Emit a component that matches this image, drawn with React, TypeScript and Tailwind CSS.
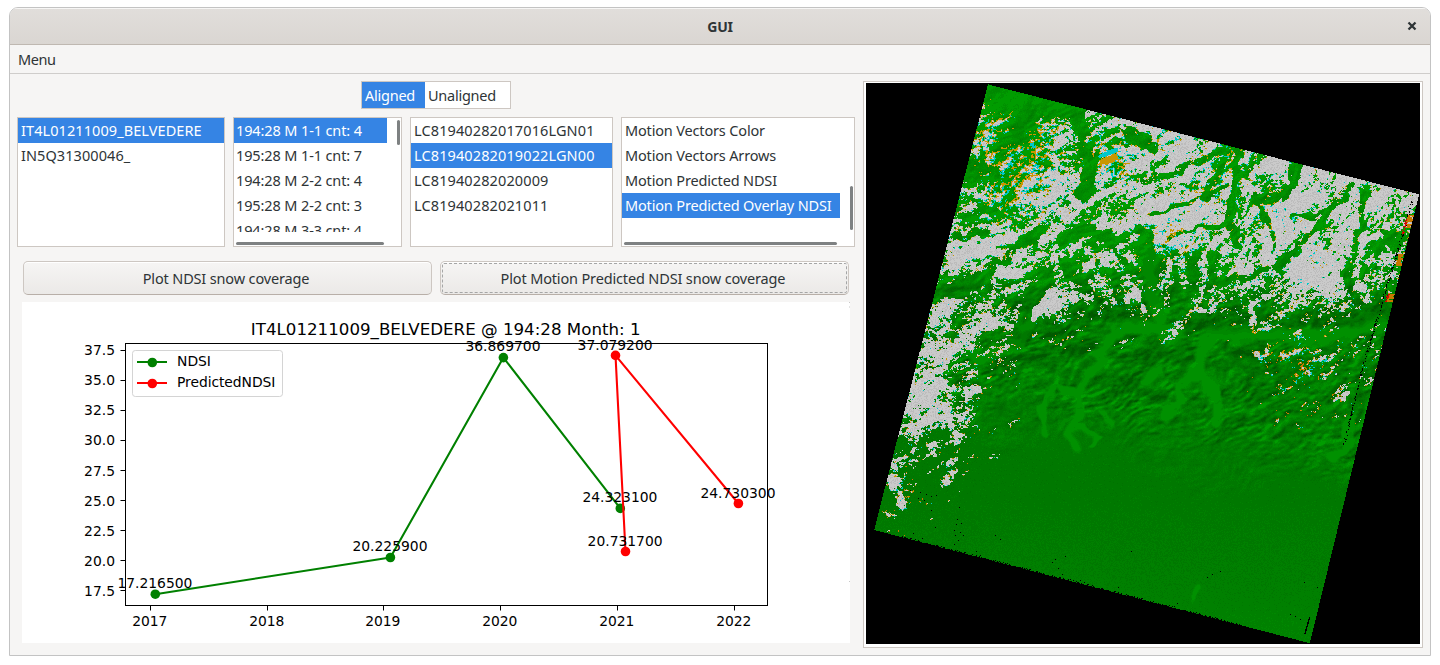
import { useMemo, type ReactNode } from "react";

/* ---------- terrain raster ---------- */

type Pt = [number, number];

const X0 = 866;
const Y0 = 83;
const W = 554;
const H = 561;

// Snow cover in percent, sampled every 40px from (860, 80).
const SNOW: number[][] = [
  [0, 0, 0, 0, 0, 10, 60, 60, 70, 60, 40, 60, 60, 60, 60],
  [0, 30, 36, 40, 16, 42, 60, 72, 85, 48, 50, 68, 84, 84, 74],
  [0, 30, 50, 55, 42, 55, 56, 70, 78, 52, 62, 70, 92, 86, 78],
  [0, 30, 30, 44, 54, 72, 82, 80, 70, 72, 48, 84, 88, 78, 68],
  [0, 50, 82, 86, 82, 68, 44, 58, 82, 86, 88, 84, 86, 60, 34],
  [0, 30, 50, 52, 66, 60, 42, 30, 20, 44, 48, 84, 68, 44, 0],
  [30, 46, 58, 52, 10, 26, 8, 8, 3, 3, 22, 20, 16, 8, 0],
  [60, 74, 70, 36, 0, 2, 0, 0, 0, 2, 10, 30, 42, 26, 0],
  [60, 82, 66, 10, 4, 0, 0, 0, 0, 0, 4, 12, 12, 2, 0],
  [10, 18, 38, 12, 0, 0, 0, 0, 0, 0, 0, 0, 0, 0, 0],
  [20, 30, 6, 0, 0, 0, 0, 0, 0, 0, 0, 0, 0, 0, 0],
  [4, 10, 0, 0, 0, 0, 0, 0, 0, 0, 0, 0, 0, 0, 0],
  [0, 0, 0, 0, 0, 0, 0, 0, 0, 0, 0, 0, 0, 0, 0],
];

const TINT: [number, number, number, number][] = [
  [1000, 140, 40, 0.9],
  [1025, 175, 38, 1],
  [1035, 130, 22, 0.7],
  [1112, 158, 26, 1],
  [1160, 130, 25, 0.6],
  [1170, 234, 30, 0.8],
  [1230, 160, 26, 0.6],
  [1272, 212, 20, 0.9],
  [1315, 260, 16, 0.6],
  [1290, 365, 45, 0.8],
  [1000, 205, 26, 0.5],
  [905, 495, 20, 0.4],
  [1205, 190, 25, 0.5],
];

const VALLEYS: { w: number; p: Pt[] }[] = [
  { w: 4, p: [[1079, 112], [1084, 140], [1092, 162], [1082, 195]] },
  { w: 5, p: [[1040, 108], [1022, 118], [1015, 138], [1000, 150]] },
  { w: 7, p: [[962, 178], [975, 172], [990, 172]] },
  { w: 3, p: [[940, 290], [970, 282], [1000, 262], [1042, 228]] },
  { w: 4, p: [[930, 292], [950, 290], [975, 286]] },
  { w: 3, p: [[958, 236], [985, 232]] },
  { w: 3, p: [[950, 208], [975, 214], [995, 208]] },
  { w: 4, p: [[1062, 240], [1085, 230], [1105, 236], [1125, 252], [1145, 276]] },
  { w: 5, p: [[1143, 234], [1147, 270], [1150, 300]] },
  { w: 2, p: [[1142, 180], [1170, 172], [1200, 160], [1225, 150]] },
  { w: 2.4, p: [[1236, 150], [1232, 190], [1229, 222], [1240, 245]] },
  { w: 2.6, p: [[1256, 200], [1285, 196], [1298, 165]] },
  { w: 2, p: [[1256, 198], [1265, 222], [1274, 246]] },
  { w: 2.2, p: [[1352, 182], [1335, 206], [1312, 232], [1295, 255], [1270, 270], [1215, 282]] },
  { w: 2, p: [[1365, 195], [1362, 222], [1352, 246]] },
  { w: 1.6, p: [[1290, 215], [1315, 218], [1335, 208]] },
  { w: 2, p: [[1380, 230], [1405, 240]] },
  { w: 3, p: [[1365, 250], [1390, 240], [1400, 260]] },
  { w: 3, p: [[1345, 270], [1350, 290], [1365, 305]] },
  { w: 6, p: [[1026, 330], [1028, 305], [1046, 275]] },
  { w: 3, p: [[1062, 258], [1072, 275], [1082, 283]] },
  { w: 2, p: [[1100, 260], [1085, 278], [1080, 292], [1100, 302]] },
  { w: 3, p: [[1115, 270], [1110, 290], [1120, 305]] },
  { w: 3, p: [[1175, 255], [1176, 292]] },
  { w: 3, p: [[1194, 255], [1190, 290]] },
  { w: 3, p: [[1213, 255], [1215, 280]] },
  { w: 2, p: [[1205, 200], [1212, 180], [1220, 165]] },
  { w: 1.6, p: [[1150, 215], [1190, 205], [1225, 185]] },
  { w: 1.6, p: [[1160, 242], [1190, 230], [1228, 222]] },
  { w: 4, p: [[1130, 132], [1150, 145]] },
];

const RIDGES: Pt[][] = [
  [[955, 348], [962, 335], [985, 325], [1010, 325]],
  [[1062, 298], [1040, 310], [1035, 316]],
  [[1171, 250], [1167, 280], [1163, 298]],
  [[1207, 260], [1203, 285], [1193, 305], [1180, 325], [1165, 340]],
  [[1195, 310], [1215, 308]],
  [[1252, 322], [1252, 305], [1262, 295], [1290, 285]],
  [[1180, 258], [1183, 280]],
  [[1120, 245], [1130, 255], [1138, 264]],
  [[1115, 262], [1130, 285], [1142, 308]],
  [[1050, 300], [1062, 285], [1072, 282]],
  [[1050, 310], [1075, 302], [1088, 298]],
  [[1090, 260], [1095, 275], [1108, 290]],
  [[930, 350], [915, 375], [905, 420]],
  [[945, 400], [948, 425], [958, 440], [952, 465], [945, 485]],
  [[930, 395], [932, 430]],
  [[965, 394], [980, 388]],
  [[892, 470], [896, 490], [902, 505]],
  [[930, 442], [932, 455]],
  [[1360, 282], [1367, 298]],
  [[1330, 290], [1325, 310]],
  [[1300, 275], [1290, 300]],
];

const LAKES: { w: number; p: Pt[] }[] = [
  { w: 5, p: [[1108, 340], [1102, 354]] },
  { w: 3, p: [[1100, 358], [1080, 386], [1078, 415], [1068, 430], [1076, 447]] },
  { w: 3, p: [[1060, 388], [1076, 396]] },
  { w: 2, p: [[1052, 388], [1042, 410], [1046, 432]] },
  { w: 2, p: [[1090, 445], [1096, 435], [1076, 426]] },
  { w: 3, p: [[1102, 416], [1110, 425]] },
  { w: 3.5, p: [[1202, 350], [1200, 372], [1217, 400], [1216, 422]] },
  { w: 3, p: [[1196, 372], [1176, 388], [1178, 404], [1165, 416]] },
  { w: 3, p: [[1160, 370], [1145, 380]] },
  { w: 5, p: [[1204, 350], [1212, 334], [1260, 332], [1330, 336], [1384, 322]] },
  { w: 5, p: [[1115, 330], [1150, 328], [1175, 334]] },
  { w: 3, p: [[1350, 420], [1346, 450], [1330, 456]] },
  { w: 2, p: [[1197, 590], [1192, 600]] },
  { w: 4, p: [[1035, 316], [1020, 340], [975, 360]] },
  { w: 4, p: [[1150, 255], [1150, 290], [1160, 320]] },
  { w: 4, p: [[1215, 295], [1225, 285], [1270, 272]] },
];

const DARKS: { w: number; p: Pt[] }[] = [
  { w: 6, p: [[1190, 320], [1230, 323], [1290, 318], [1385, 312]] },
  { w: 4, p: [[1000, 344], [1040, 332], [1085, 318], [1140, 312]] },
  { w: 4, p: [[1000, 362], [1050, 352], [1090, 345]] },
  { w: 4, p: [[1060, 290], [1090, 298], [1110, 306], [1150, 316]] },
  { w: 4, p: [[1218, 300], [1232, 312]] },
  { w: 3, p: [[1160, 262], [1160, 285], [1176, 312]] },
  { w: 4, p: [[1115, 352], [1130, 362], [1160, 352], [1190, 356]] },
  { w: 4, p: [[1095, 400], [1125, 385], [1155, 392]] },
  { w: 4, p: [[1230, 350], [1260, 362], [1290, 385]] },
];

// Pixels with no data, scattered near the southern border.
const GAPS: Pt[] = [
  [910, 490], [920, 492], [926, 494], [931, 496], [924, 500], [936, 495], [918, 498], [931, 510], [959, 507],
  [957, 519], [956, 524], [961, 523], [954, 530], [960, 532], [955, 535], [958, 540], [954, 544], [963, 535],
  [935, 527], [913, 533], [922, 538], [936, 545], [976, 551], [980, 555], [995, 535], [1000, 539], [1131, 551],
  [1055, 559], [1052, 562], [1065, 556], [1058, 568], [1062, 574], [1070, 579], [1080, 580], [1084, 582],
  [1118, 587], [1207, 577], [1212, 574], [1220, 571], [1304, 582], [1317, 587], [1290, 614], [1295, 616],
  [1300, 619], [1177, 603], [1174, 606], [1227, 621], [1239, 624],
];

function hash(x: number, y: number, s: number): number {
  let h = Math.imul(x, 374761393) + Math.imul(y, 668265263) + Math.imul(s, 1442695041);
  h = Math.imul(h ^ (h >>> 13), 1274126177);
  h = Math.imul(h ^ (h >>> 15), 2246822519);
  return ((h ^ (h >>> 16)) >>> 0) / 4294967296;
}

function noise(x: number, y: number, s: number): number {
  const xi = Math.floor(x);
  const yi = Math.floor(y);
  const fx = x - xi;
  const fy = y - yi;
  const u = fx * fx * (3 - 2 * fx);
  const v = fy * fy * (3 - 2 * fy);
  const a = hash(xi, yi, s);
  const b = hash(xi + 1, yi, s);
  const c = hash(xi, yi + 1, s);
  const d = hash(xi + 1, yi + 1, s);
  return a + (b - a) * u + (c - a) * v + (a - b - c + d) * u * v;
}

function folds(x: number, y: number, t: number): number {
  const u = x * Math.cos(t) - y * Math.sin(t);
  const v = x * Math.sin(t) + y * Math.cos(t);
  return 0.55 * noise(u / 17, v / 7, 1) + 0.45 * noise(u / 7, v / 3.2, 2);
}

// Ridges run up to the right in the west and steepen towards the east.
function relief(x: number, y: number): number {
  const wx = x + 14 * (noise(x / 30, y / 30, 9) - 0.5);
  const wy = y + 14 * (noise(x / 30, y / 30, 10) - 0.5);
  const k = y > 320 ? 0 : Math.max(0, Math.min(1, (x - 1150) / 80)) * Math.min(1, (320 - y) / 50);
  if (k === 0) return folds(wx, wy, 0.45);
  if (k === 1) return folds(wx, wy, 0.9);
  return folds(wx, wy, 0.45) * (1 - k) + folds(wx, wy, 0.9) * k;
}

function segDist(x: number, y: number, a: Pt, b: Pt): number {
  const dx = b[0] - a[0];
  const dy = b[1] - a[1];
  const t = Math.max(0, Math.min(1, ((x - a[0]) * dx + (y - a[1]) * dy) / (dx * dx + dy * dy)));
  return Math.hypot(x - a[0] - t * dx, y - a[1] - t * dy);
}

function field(lines: { w: number; p: Pt[] }[]): Float32Array {
  const out = new Float32Array(W * H);
  for (const { w, p } of lines) {
    for (let i = 0; i + 1 < p.length; i++) {
      const r = w * 2;
      const pad = r + 5;
      const xa = Math.max(0, Math.floor(Math.min(p[i][0], p[i + 1][0]) - pad - X0));
      const xb = Math.min(W - 1, Math.ceil(Math.max(p[i][0], p[i + 1][0]) + pad - X0));
      const ya = Math.max(0, Math.floor(Math.min(p[i][1], p[i + 1][1]) - pad - Y0));
      const yb = Math.min(H - 1, Math.ceil(Math.max(p[i][1], p[i + 1][1]) + pad - Y0));
      for (let y = ya; y <= yb; y++) {
        for (let x = xa; x <= xb; x++) {
          const jx = 8 * (noise(x / 9, y / 9, 21) - 0.5);
          const jy = 8 * (noise(x / 9, y / 9, 22) - 0.5);
          const d = segDist(x + X0 + jx, y + Y0 + jy, p[i], p[i + 1]);
          const k = Math.max(0, Math.min(1, (r - d) / w));
          if (k > out[y * W + x]) out[y * W + x] = k;
        }
      }
    }
  }
  return out;
}

function snowAt(x: number, y: number): number {
  const gx = (x - 860) / 40;
  const gy = Math.min(11.99, Math.max(0, (y - 80) / 40));
  const xi = Math.min(13, Math.floor(gx));
  const yi = Math.floor(gy);
  const fx = gx - xi;
  const fy = gy - yi;
  const r0 = SNOW[yi];
  const r1 = SNOW[yi + 1];
  return ((r0[xi] * (1 - fx) + r0[xi + 1] * fx) * (1 - fy) + (r1[xi] * (1 - fx) + r1[xi + 1] * fx) * fy) / 100;
}

const PALETTE = [
  "#005800", "#006200", "#006a00", "#007200", "#007800", "#008000", "#008800", "#009000", "#009c00",
  "#cacaca", "#bcbcbc", "#c89600", "#00c8c8", "#000000", "#dc0000", "#c87800",
];

function buildTerrain(): { color: string; d: string }[] {
  const valley = field(VALLEYS);
  const ridge = field(RIDGES.map((p) => ({ w: 3, p })));
  const lake = field(LAKES);
  const dark = field(DARKS);
  const gaps = new Set(GAPS.map(([x, y]) => y * 2000 + x));
  const parts: string[][] = PALETTE.map(() => []);

  for (let j = 0; j < H; j++) {
    const y = j + Y0;
    const left = 987.5 - ((y - 84) * 114) / 446;
    const right = 1418.5 - ((y - 194) * 109) / 448;
    let prev = -1;
    let start = 0;
    for (let i = 0; i <= W; i++) {
      const x = i + X0;
      let c = -1;
      const top = 84 + ((x - 988) * 110) / 431;
      const bottom = 529.6 + ((x - 874) * 113) / 435;
      if (i < W && x >= left && x <= right && y >= top && y <= bottom) {
        const k = j * W + i;
        const base = relief(x, y);
        const grain = hash(x, y, 5);
        const fine = noise(x / 2.2, y / 1.7, 3);
        const n = 0.66 * base + 0.34 * fine;
        const slope = base - relief(x - 2, y - 2);
        const corner = x < 1085 ? Math.max(0, Math.min(1, (y - top - 12) / 14)) : 1;
        let s = snowAt(x, y) * corner;
        s = s * (1 - valley[k] * 0.85);
        s = Math.max(s, ridge[k] * 0.62);
        const level = s < 0.02 ? -1 : 0.5 + (s - 0.52) * 0.5 + (grain - 0.5) * 0.12 - (s < 0.1 ? 0.04 : 0);
        let tint = 0.16;
        for (const [tx, ty, tr, ta] of TINT) {
          const q = ((x - tx) ** 2 + (y - ty) ** 2) / (tr * tr);
          if (q < 3) tint += ta * Math.exp(-q * 1.4);
        }
        const gap = n - level;
        if (gap < 0) c = grain > 0.35 ? 9 : 10;
        if (Math.abs(gap) < 0.05 * tint && level > 0) {
          c = slope > 0 ? 12 : 11;
          if (y > 350 && c === 11 && grain > 0.5) c = 15;
        }
        if (Math.hypot((x - 1108) / 10, (y - 160 + (x - 1108) * 0.3) / 4) < 0.7 + fine * 0.5) c = 11;
        if (Math.hypot((x - 1109) / 12, (y - 152 + (x - 1109) * 0.35) / 3) < 0.6 + fine * 0.5) c = 12;
        if (c < 0) {
          const plain = 340 + (x - 866) * 0.12 + 60 * noise(x / 50, y / 50, 7);
          const flat = Math.max(0, Math.min(1, (y - plain - 10) / 60));
          const south = Math.max(0, Math.min(1, (y - 255) / 50));
          let g = 7.6 - 3.1 * south;
          g += slope * (5 + 6 * south) * (1 - flat);
          g += (noise(x / 13, y / 7, 6) - 0.5) * (2 + 2 * south) * (1 - flat);
          g += (noise(x / 3.4 + y / 9, y / 2.2, 8) - 0.5) * 3.4 * south * (1 - flat);
          g += flat * (-0.5 + Math.max(0, (y - 500) / 110));
          g += (grain - 0.5) * 1.1;
          g += lake[k] * (7.1 - g) * 0.9;
          g -= dark[k] * 2;
          if (s < 0.3 && valley[k] > 0) g -= valley[k] * 1;
          c = Math.max(0, Math.min(8, Math.round(g)));
        }
        const edge = right - x;
        if (edge > 3 && edge < 17 && y > 200 && y < 445) {
          const seam = 5 + 9 * Math.min(1, Math.abs(y - 205) / 160);
          if (Math.abs(edge - seam) < 1.2 && grain > 0.72) c = 13;
        }
        const strip = (y > 214 && y < 228) || (y > 253 && y < 266) || (y > 293 && y < 302);
        if (edge < 6 && strip && fine > 0.32) c = 15;
        if (edge >= 5 && edge < 8 && ((y > 218 && y < 234) || (y > 293 && y < 302)) && grain > 0.5) c = 14;
        if (bottom - y < 1.3 && grain > 0.75 && x > 900 && x < 1240) c = 13;
        if (gaps.has(y * 2000 + x)) c = 13;
        if (y > 616 && y < 634 && Math.abs(x - 1309 + (y - 617) * 0.28) < 0.7) c = 13;
      }
      if (c !== prev) {
        if (prev >= 0) parts[prev].push(`M${start} ${j}h${i - start}v1H${start}z`);
        prev = c;
        start = i;
      }
    }
  }
  return PALETTE.map((color, i) => ({ color, d: parts[i].join("") }));
}

function Terrain() {
  const layers = useMemo(buildTerrain, []);
  return (
    <svg width={W} height={H} viewBox={`0 0 ${W} ${H}`} shapeRendering="crispEdges" className="block bg-black">
      {layers.map((l) => (
        <path key={l.color} d={l.d} fill={l.color} />
      ))}
    </svg>
  );
}

/* ---------- plot ---------- */

const Y_TICKS: [string, number][] = [
  ["37.5", 350.5], ["35.0", 380.5], ["32.5", 410.5], ["30.0", 440.5], ["27.5", 470.5],
  ["25.0", 500.5], ["22.5", 530.5], ["20.0", 560.5], ["17.5", 590.5],
];
const X_TICKS: [string, number][] = [
  ["2017", 150.5], ["2018", 267.5], ["2019", 383.5], ["2020", 500.5], ["2021", 617.5], ["2022", 734.5],
];
const NDSI: [number, number, string, number][] = [
  [155.3, 594.2, "17.216500", 588],
  [390.4, 557.5, "20.225900", 551],
  [503.4, 357.6, "36.869700", 351],
  [620.3, 508.4, "24.323100", 502],
];
const PREDICTED: [number, number, string, number][] = [
  [738.4, 503.5, "24.730300", 498],
  [615.5, 355.4, "37.079200", 350],
  [625.5, 551.5, "20.731700", 546],
];

function Plot() {
  const series = [
    { color: "#008000", pts: NDSI },
    { color: "#ff0000", pts: PREDICTED },
  ];
  return (
    <svg
      width="828"
      height="341"
      viewBox="22 302 828 341"
      className="block bg-white [font-family:'DejaVu_Sans',sans-serif]"
      fontSize="13.89"
      fill="#000"
    >
      {series.map((s) => (
        <g key={s.color} fill={s.color}>
          <polyline
            points={s.pts.map((p) => `${p[0]},${p[1]}`).join(" ")}
            fill="none"
            stroke={s.color}
            strokeWidth="2.08"
            strokeLinejoin="round"
          />
          {s.pts.map((p) => (
            <circle key={p[2]} cx={p[0]} cy={p[1]} r="4.8" />
          ))}
        </g>
      ))}
      <rect x="125.5" y="343.5" width="642" height="262" fill="none" stroke="#000" />
      {Y_TICKS.map(([t, y]) => (
        <g key={t}>
          <path d={`M120.5 ${y}h5`} stroke="#000" />
          <text x="115" y={y > 460 ? y + 5.5 : y + 4.5} textAnchor="end">{t}</text>
        </g>
      ))}
      {X_TICKS.map(([t, x]) => (
        <g key={t}>
          <path d={`M${x} 605.5v5`} stroke="#000" />
          <text x={x - 0.7} y="626" textAnchor="middle">{t}</text>
        </g>
      ))}
      {series.map((s) =>
        s.pts.map((p) => (
          <text key={p[2]} x={p[0] - 0.4} y={p[3]} textAnchor="middle">{p[2]}</text>
        )),
      )}
      <text x="445.7" y="335" textAnchor="middle" fontSize="16.67">IT4L01211009_BELVEDERE @ 194:28 Month: 1</text>
      <rect x="132.5" y="350.5" width="150" height="46" rx="2.8" fill="#fff" stroke="#d4d4d4" />
      <path d="M137 362h30" stroke="#008000" strokeWidth="2" />
      <circle cx="152.3" cy="362.5" r="4.8" fill="#008000" />
      <text x="177" y="366">NDSI</text>
      <path d="M137 383h30" stroke="#f00" strokeWidth="2" />
      <circle cx="152.3" cy="383.5" r="4.8" fill="#f00" />
      <text x="177" y="387" letterSpacing="-0.06">PredictedNDSI</text>
      <path d="M849.5 302v1M849.5 306.5v1M849.5 581v1" stroke="#c8c8c8" />
    </svg>
  );
}

/* ---------- widgets ---------- */

function Row({ label, selected, className = "pl-[3px]" }: { label: string; selected?: boolean; className?: string }) {
  return (
    <div
      className={`flex h-[25px] shrink-0 items-center whitespace-nowrap ${
        selected ? "bg-[#3584e4] text-white" : ""
      } ${className}`}
    >
      {label}
    </div>
  );
}

function ListBox({ children, className }: { children: ReactNode; className: string }) {
  return <div className={`relative h-[130px] overflow-hidden border border-[#cdc7c2] bg-white ${className}`}>{children}</div>;
}

function Bar({ className }: { className: string }) {
  return <div className={`absolute rounded-full bg-[#7e8182] ${className}`} />;
}

function Button({ children, focused }: { children: ReactNode; focused?: boolean }) {
  return (
    <button className="h-[34px] w-[409px] rounded-[5px] border border-[#cdc7c2] border-b-[#b8afa8] bg-linear-to-b from-[#f6f5f4] to-[#ebe9e7] p-px tracking-[-0.15px] shadow-[inset_0_1px_white]">
      <span
        className={`flex h-full items-center justify-center rounded-[2px] border pr-[3px] ${
          focused ? "border-dashed border-[#a5a6a6]" : "border-transparent"
        }`}
      >
        {children}
      </span>
    </button>
  );
}

export default function App() {
  return (
    <div className="h-[665px] w-[1440px] overflow-hidden bg-white pt-[7px] pl-[9px] text-[14.5px] leading-[25px] text-[#2e3436] [font-family:'Noto_Sans',sans-serif]">
      <div className="h-[649px] w-[1422px] overflow-hidden rounded-t-[9px] border border-[#c3c3c3] bg-[#f6f5f4]">
        <header className="grid h-[37px] grid-cols-[1fr_auto_1fr] items-center border-b border-[#bfb8b1] bg-linear-to-b from-[#e1dedb] to-[#dad6d2] shadow-[inset_0_1px_#f7f6f5]">
          <span />
          <h1 className="text-[14px] font-bold tracking-[-0.3px]">GUI</h1>
          <svg width="10" height="10" viewBox="0 0 10 10" className="mr-[13px] justify-self-end" aria-label="Close">
            <path d="M1.5 1.5l7 7M8.5 1.5l-7 7" stroke="#2e3436" strokeWidth="2.3" />
          </svg>
        </header>
        <nav className="flex h-[29px] items-center border-b border-[#cfcdcb] pl-2 tracking-[-0.4px]">Menu</nav>
        <div className="flex pl-[7px] pt-[7px]">
          <div className="w-[846px]">
            <div className="ml-[344px] flex h-[28px] w-[150px] border border-[#cdc7c2] bg-white tracking-[-0.25px]">
              <div className="flex w-[63px] items-center bg-[#3584e4] pl-[3px] text-white">Aligned</div>
              <div className="flex items-center pl-[3px]">Unaligned</div>
            </div>
            <div className="mt-2 flex gap-2">
              <ListBox className="w-[208px] tracking-[0.08px]">
                <Row selected label="IT4L01211009_BELVEDERE" />
                <Row label="IN5Q31300046_" />
              </ListBox>
              <ListBox className="w-[169px] tracking-[-0.12px]">
                <div className="flex h-[114px] w-[153px] flex-col overflow-hidden">
                  <Row selected label="194:28 M 1-1 cnt: 4" className="pl-[2px]" />
                  <Row label="195:28 M 1-1 cnt: 7" className="pl-[2px]" />
                  <Row label="194:28 M 2-2 cnt: 4" className="pl-[2px]" />
                  <Row label="195:28 M 2-2 cnt: 3" className="pl-[2px]" />
                  <Row label="194:28 M 3-3 cnt: 4" className="pl-[2px]" />
                </div>
                <Bar className="top-[2px] right-[1px] h-[25px] w-[3px]" />
                <Bar className="bottom-[1px] left-[2px] h-[3px] w-[148px]" />
              </ListBox>
              <ListBox className="w-[203px] tracking-[0.12px]">
                <Row label="LC81940282017016LGN01" />
                <Row selected label="LC81940282019022LGN00" />
                <Row label="LC81940282020009" />
                <Row label="LC81940282021011" />
              </ListBox>
              <ListBox className="w-[234px] tracking-[-0.16px]">
                <Row label="Motion Vectors Color" />
                <Row label="Motion Vectors Arrows" />
                <Row label="Motion Predicted NDSI" />
                <Row selected label="Motion Predicted Overlay NDSI" className="w-[218px] pl-[3px]" />
                <Bar className="top-[68px] right-[1px] h-[44px] w-[3px]" />
                <Bar className="bottom-[1px] left-[2px] h-[3px] w-[213px]" />
              </ListBox>
            </div>
            <div className="mt-[14px] ml-[6px] flex gap-2">
              <Button>Plot NDSI snow coverage</Button>
              <Button focused>Plot Motion Predicted NDSI snow coverage</Button>
            </div>
            <div className="mt-[7px] ml-[5px]">
              <Plot />
            </div>
          </div>
          <div className="h-[567px] w-[560px] border border-[#cdc7c2] bg-white pt-px pl-[2px]">
            <Terrain />
          </div>
        </div>
      </div>
    </div>
  );
}
